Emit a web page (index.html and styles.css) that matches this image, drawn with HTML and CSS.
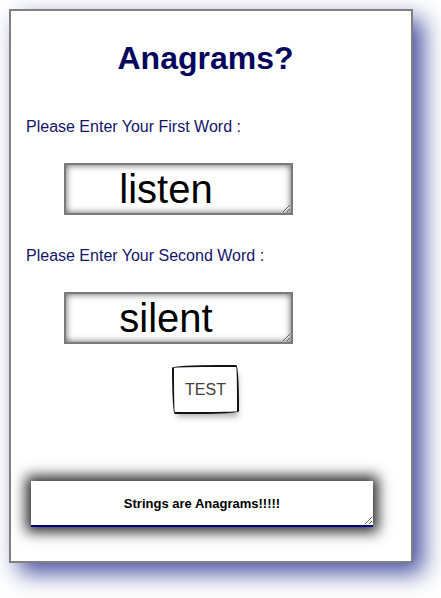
FILE: index.html
```html
<!DOCTYPE html>
<html>
<head>
<meta charset="utf-8">
<title>Anagrams?</title>
<link rel="stylesheet" href="styles.css">
</head>
<body>
<div class="page">
  <div class="card">
    <h1 class="title">Anagrams?</h1>
    <label class="label label-first">Please Enter Your First Word :</label>
    <textarea class="word word-first" readonly>listen</textarea>
    <label class="label label-second">Please Enter Your Second Word :</label>
    <textarea class="word word-second" readonly>silent</textarea>
    <button class="test-btn" type="button">TEST</button>
    <textarea class="result" readonly>Strings are Anagrams!!!!!</textarea>
  </div>
</div>
</body>
</html>
```
FILE: styles.css
```css
html, body {
  margin: 0;
  padding: 0;
  background: #ffffff;
}

.page {
  padding: 9px 9px 36px 9px;
}

.card {
  width: 404px;
  height: 554px;
  box-sizing: border-box;
  border: 2px solid #808080;
  padding: 0 25px 0 14px;
  background: #ffffff;
  box-shadow: 10px 10px 22px rgba(25, 35, 135, 0.8);
  font-family: "Liberation Sans", Arial, sans-serif;
  display: flex;
  flex-direction: column;
  align-items: flex-start;
}

.title {
  align-self: stretch;
  margin: 29px 0 0 0;
  font-size: 32px;
  font-weight: bold;
  text-align: center;
  color: #06065e;
  line-height: normal;
}

.label {
  display: block;
  margin-left: 1px;
  font-size: 16px;
  color: #14146a;
  line-height: normal;
}

.label-first {
  margin-top: 41px;
}

.label-second {
  margin-top: 32px;
}

.word {
  display: block;
  margin: 27px 0 0 39px;
  width: 229px;
  height: 52px;
  box-sizing: border-box;
  border: 2px solid #7a7a7a;
  padding: 2px 27px 0 2px;
  box-shadow: inset 0 0 7px rgba(0, 0, 0, 0.65);
  font-family: "Liberation Sans", Arial, sans-serif;
  font-size: 40px;
  line-height: normal;
  text-align: center;
  color: #000000;
  background: #ffffff;
  overflow: hidden;
  outline: none;
}

.test-btn {
  align-self: center;
  margin-top: 21px;
  width: 67px;
  height: 49px;
  box-sizing: border-box;
  padding: 0;
  background: #ffffff;
  color: #41403e;
  border: 2px solid #111111;
  border-radius: 255px 15px 225px 15px / 15px 225px 15px 255px;
  box-shadow: 2px 6px 6px -3px rgba(0, 0, 0, 0.3);
  font-family: "Liberation Sans", Arial, sans-serif;
  font-size: 16px;
}

.result {
  display: block;
  margin: 67px 0 0 6px;
  width: 342px;
  height: 46px;
  box-sizing: border-box;
  border: none;
  border-bottom: 2px solid #000080;
  padding: 15px 4px 0 4px;
  box-shadow: 0 0 13px 5px rgba(0, 0, 0, 0.85);
  font-family: "Liberation Sans", Arial, sans-serif;
  font-size: 13px;
  font-weight: bold;
  line-height: normal;
  text-align: center;
  color: #000000;
  background: #ffffff;
  overflow: hidden;
  outline: none;
}
```
